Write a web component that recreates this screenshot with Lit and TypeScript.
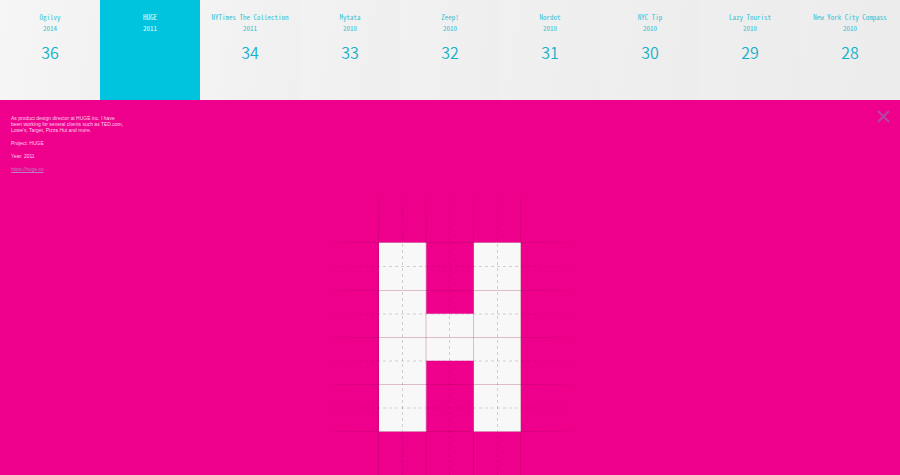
import { LitElement, html, css, svg } from "lit";
import { customElement, state } from "lit/decorators.js";
import { classMap } from "lit/directives/class-map.js";

interface Project {
  name: string;
  year: number;
  index: number;
}

const projects: Project[] = [
  { name: "Ogilvy", year: 2014, index: 36 },
  { name: "HUGE", year: 2011, index: 35 },
  { name: "NYTimes The Collection", year: 2011, index: 34 },
  { name: "Mytata", year: 2010, index: 33 },
  { name: "Zeep!", year: 2010, index: 32 },
  { name: "Nordot", year: 2010, index: 31 },
  { name: "NYC Tip", year: 2010, index: 30 },
  { name: "Lazy Tourist", year: 2010, index: 29 },
  { name: "New York City Compass", year: 2010, index: 28 },
];

@customElement("project-strip")
export class ProjectStrip extends LitElement {
  @state() private selected = 35;

  static styles = css`
    :host {
      display: block;
    }
    nav {
      display: grid;
      grid-template-columns: repeat(9, minmax(0, 1fr));
      background: linear-gradient(100deg, #f6f6f6, #f2f2f2 35%, #ededed);
    }
    .tile {
      display: flex;
      flex-direction: column;
      align-items: center;
      min-height: 100px;
      margin: 0;
      padding: 12px 0 0;
      border: 0;
      background: linear-gradient(100deg, #f6f6f600, #e8e8e840);
      color: #35bfd3;
      font: 7px/11px "Noto Sans Mono CJK SC", "Liberation Mono", monospace;
      white-space: nowrap;
      cursor: pointer;
    }
    .tile.selected {
      background: #00c3dd;
      color: #e4fbff;
    }
    .number {
      margin-top: 6px;
      font: 350 16px/24px "Noto Sans CJK SC", sans-serif;
      color: #12b0ca;
    }
  `;

  render() {
    return html`<nav aria-label="Projects">
      ${projects.map((p) => {
        const selected = p.index === this.selected;
        return html`<button
          class=${classMap({ tile: true, selected })}
          @click=${() => (this.selected = p.index)}
        >
          <span>${p.name}</span>
          <span>${p.year}</span>
          ${selected ? null : html`<span class="number">${p.index}</span>`}
        </button>`;
      })}
    </nav>`;
  }
}

@customElement("letter-grid")
export class LetterGrid extends LitElement {
  static styles = css`
    :host {
      display: block;
    }
    svg {
      display: block;
    }
    .letter {
      fill: #f8f8f8;
    }
    .solid,
    .dashed {
      fill: none;
      stroke: #8c0d4b;
    }
    .solid {
      stroke-opacity: 0.26;
    }
    .dashed {
      stroke: #555;
      stroke-opacity: 0.24;
      stroke-dasharray: 3 3;
    }
    .faint {
      stroke: #a00060;
      stroke-opacity: 0.34;
    }
  `;

  render() {
    const solidX = [49.5, 97, 144.5, 191.5];
    const dashedX = [73.5, 120.5, 168.5];
    const solidY = [46.5, 94.5, 141.5, 188.5, 235.5];
    const dashedY = [70.5, 118, 165, 212];
    const shape = "M50 46.6h47.3v71.2h47.4V46.6H192v189.2h-47.3v-71H97.3v71H50z";
    return html`<svg width="242" height="279" viewBox="0 0 242 279" role="img" aria-label="H">
      <defs>
        <clipPath id="shape"><path d=${shape} /></clipPath>
        <linearGradient id="fadeX" x2="1" y2="0">
          <stop offset="0" stop-color="#555" />
          <stop offset="0.2" stop-color="#fff" />
          <stop offset="0.8" stop-color="#fff" />
          <stop offset="1" stop-color="#555" />
        </linearGradient>
        <linearGradient id="fadeY" x2="0" y2="1">
          <stop offset="0" stop-color="#888" />
          <stop offset="0.18" stop-color="#fff" />
          <stop offset="1" stop-color="#fff" />
        </linearGradient>
        <mask id="sides" maskUnits="userSpaceOnUse" x="0" y="0" width="242" height="279">
          <rect width="242" height="279" fill="url(#fadeX)" />
        </mask>
        <mask id="ends" maskUnits="userSpaceOnUse" x="0" y="0" width="242" height="279">
          <rect width="242" height="279" fill="url(#fadeY)" />
        </mask>
      </defs>
      <g mask="url(#sides)">
        ${dashedY.map((y) => svg`<path class="dashed faint" d="M0 ${y}H242" />`)}
      </g>
      <g mask="url(#ends)">
        ${dashedX.map((x) => svg`<path class="dashed faint" d="M${x} 0V279" />`)}
      </g>
      <path class="letter" d=${shape} />
      <g mask="url(#sides)">
        ${solidY.map((y) => svg`<path class="solid" d="M0 ${y}H242" />`)}
      </g>
      <g mask="url(#ends)">
        ${solidX.map((x) => svg`<path class="solid" d="M${x} 0V279" />`)}
      </g>
      <g clip-path="url(#shape)">
        ${dashedX.map((x) => svg`<path class="dashed" d="M${x} 0V279" />`)}
        ${dashedY.map((y) => svg`<path class="dashed" d="M0 ${y}H242" />`)}
      </g>
    </svg>`;
  }
}

@customElement("app-root")
export class AppRoot extends LitElement {
  static styles = css`
    :host {
      display: flex;
      flex-direction: column;
      min-height: 100vh;
      background: #ef008c;
    }
    main {
      flex: 1;
      display: grid;
      grid-template-columns: minmax(0, 1fr) auto minmax(0, 1fr);
      align-items: start;
    }
    .details {
      display: flex;
      flex-direction: column;
      gap: 7px;
      padding: 15px 0 0 11px;
      color: #ffd0ec;
      font: 5px/6px "Liberation Sans", sans-serif;
    }
    p {
      margin: 0;
    }
    a {
      color: #b880c0;
    }
    letter-grid {
      margin-top: 96px;
    }
    .close {
      justify-self: end;
      margin: 10px 10px 0 0;
      padding: 0;
      border: 0;
      background: none;
      cursor: pointer;
    }
    .close svg {
      display: block;
      stroke: #b447a3;
      stroke-width: 2;
    }
  `;

  render() {
    return html`
      <project-strip></project-strip>
      <main>
        <section class="details">
          <p>
            As product design director at HUGE inc. I have<br />
            been working for several clients such as TED.com,<br />
            Lowe's, Target, Pizza Hut and more.
          </p>
          <p>Project: HUGE</p>
          <p>Year: 2011</p>
          <p><a href="https://huge.co">https://huge.co</a></p>
        </section>
        <letter-grid></letter-grid>
        <button class="close" aria-label="Close">
          <svg width="13" height="13" viewBox="0 0 13 13"><path d="M1 1l11 11M12 1L1 12" /></svg>
        </button>
      </main>
    `;
  }
}
